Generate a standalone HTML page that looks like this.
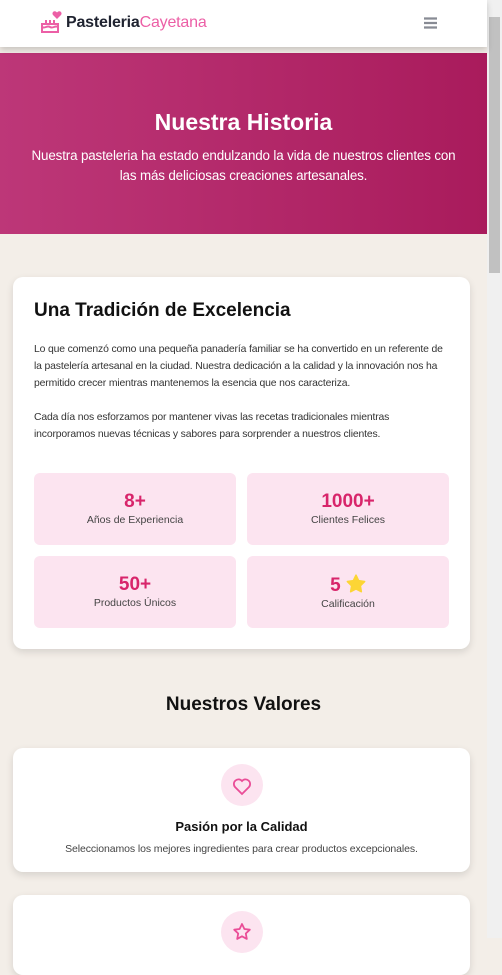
<!DOCTYPE html>
<html><head><meta charset="utf-8"><style>
*{box-sizing:border-box;margin:0;padding:0}
body{width:502px;height:938px;overflow:hidden;background:#f3eee8;font-family:"Liberation Sans",sans-serif;position:relative}
.sb{position:absolute;right:0;top:0;width:15px;height:938px;background:#f0f0f0}
.sb .th{position:absolute;left:2px;top:17px;width:11px;height:256px;background:#c1c1c1}
.hdr{position:absolute;left:0;top:0;width:487px;height:47px;background:#fff;box-shadow:0 3px 6px rgba(0,0,0,.18);z-index:2}
.logo{position:absolute;left:66px;top:14px;font-size:16px;font-weight:bold;color:#1f2330;letter-spacing:-.2px}
.logo span{font-weight:normal;color:#ec5fa6}
.hero{position:absolute;left:0;top:53px;width:487px;height:181px;background:linear-gradient(90deg,#bd3778,#a91b5c);color:#fff;text-align:center}
.hero h1{font-size:23px;margin-top:56px}
.hero p{font-size:13.4px;line-height:20px;margin:10px 24px 0;letter-spacing:-.15px}
.card{position:absolute;left:13px;width:457px;background:#fff;border-radius:10px;box-shadow:0 3px 8px rgba(0,0,0,.12)}
.c1{top:277px;height:372px;padding:23px 21px}
.c1 h2{font-size:19px;color:#111;font-weight:bold}
.c1 p{font-size:10.4px;line-height:17px;color:#333;letter-spacing:-.15px}
.st{position:absolute;width:202px;height:72px;background:#fce4f0;border-radius:6px;text-align:center}
.st b{display:block;font-size:19px;color:#d8256b;margin-top:18px;line-height:22px}
.st i{font-style:normal;font-size:10.5px;color:#444;display:block;margin-top:1px}
h3{position:absolute;top:694px;left:0;width:487px;text-align:center;font-size:19px;color:#111}
.ic{position:absolute;left:208px;width:42px;height:42px;border-radius:50%;background:#fce4f0}
</style></head><body>
<div class="hdr">
<svg style="position:absolute;left:39px;top:11px" width="24" height="22" viewBox="0 0 24 22" fill="none" stroke="#ec5fa6" stroke-width="2"><path d="M2 21h18M3 21V13h16v8M3 16c3 2 5-2 8 0s5-2 8 0M7 13v-4M11 13v-4M15 13v-4"/><path fill="#ec5fa6" stroke="none" d="M18 8l-4-4a2.3 2.3 0 013.5-3l.5.5.5-.5A2.3 2.3 0 0122 4z"/></svg>
<div class="logo">Pasteleria<span>Cayetana</span></div>
<svg style="position:absolute;left:424px;top:17px" width="13" height="12"><path d="M0 1.5h13M0 6h13M0 10.5h13" stroke="#888b94" stroke-width="2.2"/></svg>
</div>
<div class="hero"><h1>Nuestra Historia</h1><p>Nuestra pasteleria ha estado endulzando la vida de nuestros clientes con las más deliciosas creaciones artesanales.</p></div>
<div class="card c1"><h2>Una Tradición de Excelencia</h2>
<p style="margin-top:19px">Lo que comenzó como una pequeña panadería familiar se ha convertido en un referente de la pastelería artesanal en la ciudad. Nuestra dedicación a la calidad y la innovación nos ha permitido crecer mientras mantenemos la esencia que nos caracteriza.</p>
<p style="margin-top:17px">Cada día nos esforzamos por mantener vivas las recetas tradicionales mientras incorporamos nuevas técnicas y sabores para sorprender a nuestros clientes.</p>
</div>
<div class="st" style="left:34px;top:473px"><b>8+</b><i>Años de Experiencia</i></div>
<div class="st" style="left:247px;top:473px"><b>1000+</b><i>Clientes Felices</i></div>
<div class="st" style="left:34px;top:556px"><b>50+</b><i>Productos Únicos</i></div>
<div class="st" style="left:247px;top:556px"><b>5 <svg width="20" height="19" viewBox="0 0 24 23" style="vertical-align:-2px"><path d="M12 1.5l3.2 6.6 7.2 1-5.2 5.1 1.2 7.2L12 18l-6.4 3.4 1.2-7.2L1.6 9.1l7.2-1z" fill="#fcd535" stroke="#fcd535" stroke-width="2" stroke-linejoin="round"/></svg></b><i>Calificación</i></div>
<h3>Nuestros Valores</h3>
<div class="card" style="top:748px;height:124px;text-align:center">
<div class="ic" style="top:16px"><svg width="42" height="42" viewBox="0 0 42 42"><path d="M21 30l-7-7a4.5 4.5 0 017-6 4.5 4.5 0 017 6z" fill="none" stroke="#ea4d97" stroke-width="1.8"/></svg></div>
<div style="position:absolute;top:71px;width:100%;font-size:13px;font-weight:bold;color:#111">Pasión por la Calidad</div>
<div style="position:absolute;top:95px;width:100%;font-size:10.5px;color:#444;letter-spacing:-.1px">Seleccionamos los mejores ingredientes para crear productos excepcionales.</div>
</div>
<div class="card" style="top:895px;height:80px">
<div class="ic" style="top:16px"><svg width="42" height="42" viewBox="0 0 42 42"><path d="M21 13l2.4 5 5.4.7-4 3.8 1 5.4-4.8-2.6-4.8 2.6 1-5.4-4-3.8 5.4-.7z" fill="none" stroke="#ea4d97" stroke-width="1.8" stroke-linejoin="round"/></svg></div>
</div>
<div class="sb"><div class="th"></div></div>
</body></html>
